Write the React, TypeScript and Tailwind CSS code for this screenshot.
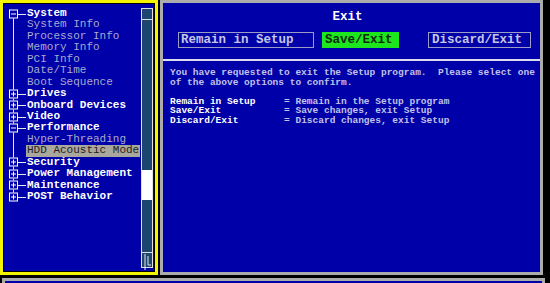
import React from "react";

type Item = { label: string; top?: boolean; open?: boolean; selected?: boolean };

const items: Item[] = [
  { label: "System", top: true, open: true },
  { label: "System Info" },
  { label: "Processor Info" },
  { label: "Memory Info" },
  { label: "PCI Info" },
  { label: "Date/Time" },
  { label: "Boot Sequence" },
  { label: "Drives", top: true },
  { label: "Onboard Devices", top: true },
  { label: "Video", top: true },
  { label: "Performance", top: true, open: true },
  { label: "Hyper-Threading" },
  { label: "HDD Acoustic Mode", selected: true },
  { label: "Security", top: true },
  { label: "Power Management", top: true },
  { label: "Maintenance", top: true },
  { label: "POST Behavior", top: true },
];

const mono = { fontFamily: '"Liberation Mono", "DejaVu Sans Mono", monospace' };

function TreeRow({ item, first, last }: { item: Item; first: boolean; last: boolean }) {
  return (
    <div className="flex h-[11.45px] items-center">
      <div className="relative h-full w-[22px] shrink-0">
        <div
          className={`absolute left-[9px] w-px bg-[#e8e8e8] ${first ? "top-1/2" : "top-0"} ${last ? "bottom-1/2" : "bottom-0"}`}
        />
        {item.top && (
          <>
            <div className="absolute left-[14px] top-1/2 h-px w-[8px] bg-[#e8e8e8]" />
            <div className="absolute left-[5px] top-1/2 flex h-[9px] w-[9px] -translate-y-1/2 items-center justify-center border border-white bg-[#0000a8]">
              <div className="relative flex h-[5px] w-[5px] items-center justify-center">
                <div className="h-px w-[5px] bg-white" />
                {!item.open && <div className="absolute left-[2px] top-0 h-[5px] w-px bg-white" />}
              </div>
            </div>
          </>
        )}
      </div>
      <span
        className={`whitespace-pre px-[1px] text-[11px] leading-[11.45px] ${
          item.selected
            ? "bg-[#aaa79d] text-[#1e1e1e]"
            : item.top
            ? "font-bold text-white"
            : "text-[#a9a9cc]"
        }`}
        style={mono}
      >
        {item.label}
      </span>
    </div>
  );
}

function ScrollBar() {
  return (
    <div className="mb-[3px] mt-[4px] flex w-[12px] flex-col border-x border-[#e0e0e0] bg-[#1c4670]">
      <div className="h-[12px] border-y border-[#e0e0e0]" />
      <div className="flex-1">
        <div className="mt-[150px] h-[30px] bg-white" />
      </div>
      <div className="relative h-[16px] border-y border-[#e0e0e0]">
        <svg width="10" height="18" viewBox="0 0 10 18" className="absolute left-0 top-0">
          <path d="M3 1 V17 M6 3 V12 H9" stroke="#e8e8e8" strokeWidth="1" fill="none" />
        </svg>
      </div>
    </div>
  );
}

export default function App() {
  return (
    <div className="flex h-[283px] w-[550px] flex-col overflow-hidden bg-black">
      <div className="flex h-[275px] gap-[2px]">
        {/* left tree panel */}
        <div className="h-full w-[158px] border-[3px] border-[#f4f400]">
          <div className="flex h-full border border-black bg-[#0000a8]">
            <div className="w-[137px] pt-[4px]">
              {items.map((item, i) => (
                <TreeRow key={item.label} item={item} first={i === 0} last={i === items.length - 1} />
              ))}
            </div>
            <ScrollBar />
          </div>
        </div>

        {/* right exit panel */}
        <div className="h-full w-[383px] border-[3px] border-[#ababab]">
          <div className="flex h-full flex-col bg-[#0000a8]" style={mono}>
            <div className="pr-[8px] pt-[7px] text-center text-[12.5px] font-bold leading-[14px] text-white">Exit</div>
            <div className="mt-[8px] flex h-[16px] items-stretch text-[12.5px] font-bold leading-[14px]">
              <div className="ml-[15px] w-[136px] border border-[#9c9cc4] px-[2px] text-[#c6c6e6]">Remain in Setup</div>
              <div className="ml-[8px] w-[77px] bg-[#1ee61e] px-[3px] pt-px text-[#0a2a0a]">Save/Exit</div>
              <div className="ml-[29px] w-[103px] border border-[#9c9cc4] px-[3px] text-[#c6c6e6]">Discard/Exit</div>
            </div>
            <div className="mt-[11px] h-[2px] bg-[#dcdcf0]" />
            <div className="mt-[7px] whitespace-pre pl-[7px] text-[9.5px] font-bold leading-[9.5px] text-[#c2c2e8]">
              <div>You have requested to exit the Setup program.  Please select one</div>
              <div>of the above options to confirm.</div>
              <div>&nbsp;</div>
              <div>
                <span className="text-white">Remain in Setup     </span>= Remain in the Setup program
              </div>
              <div>
                <span className="text-white">Save/Exit           </span>= Save changes, exit Setup
              </div>
              <div>
                <span className="text-white">Discard/Exit        </span>= Discard changes, exit Setup
              </div>
            </div>
          </div>
        </div>
      </div>

      {/* top edge of the panel below */}
      <div className="ml-[2px] mt-[3px] h-[5px] w-[543px] border-x-[3px] border-t-[3px] border-[#ababab] bg-[#0000a8]" />
    </div>
  );
}
